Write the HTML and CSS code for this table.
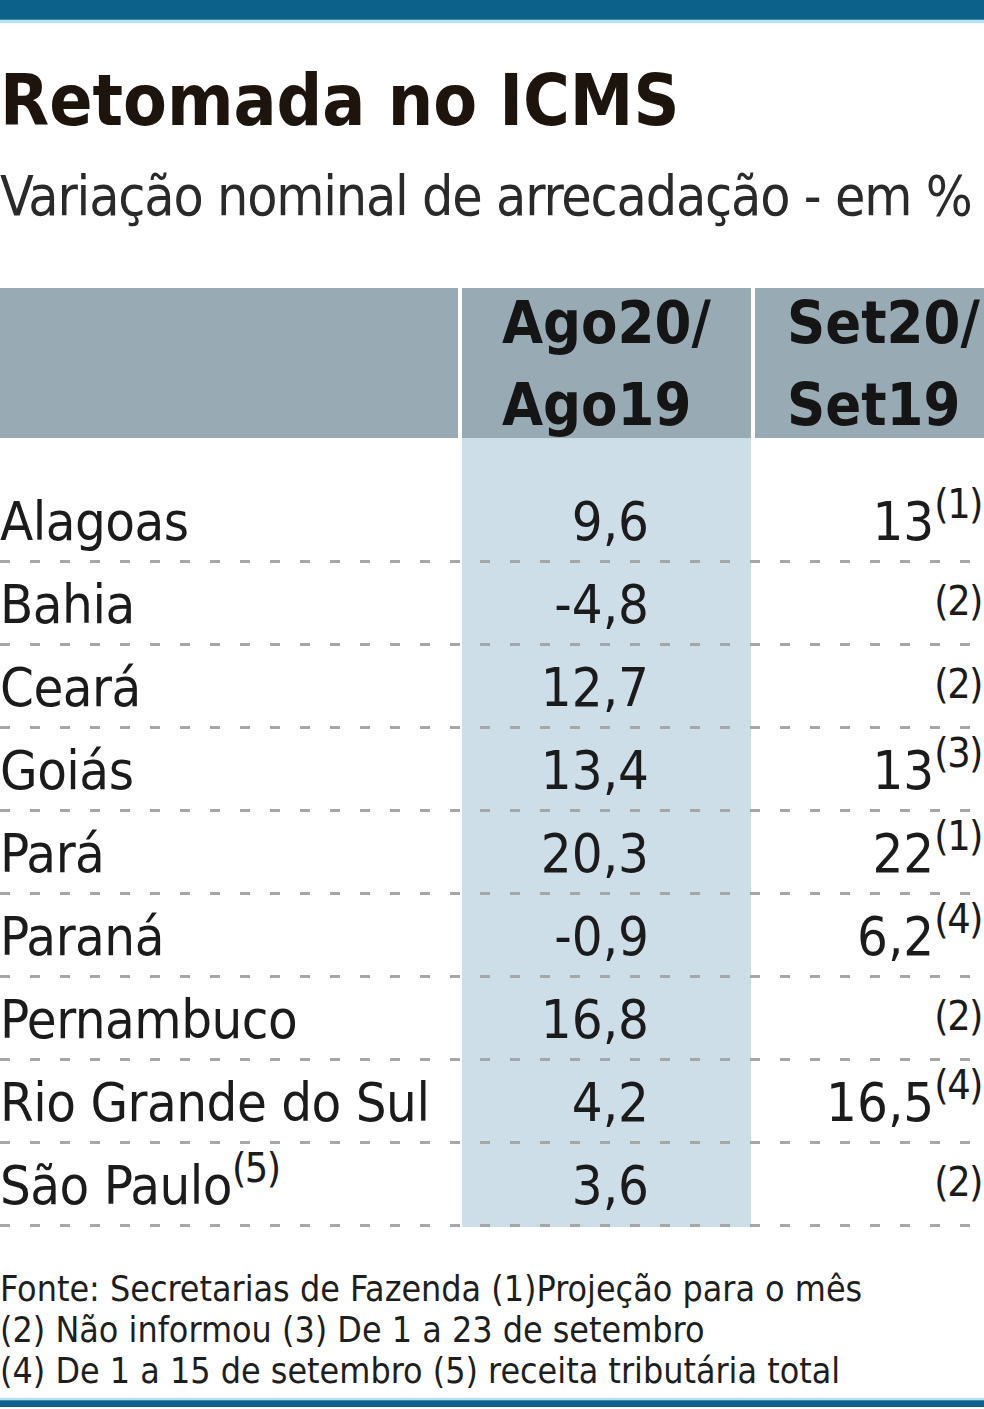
FILE: index.html
```html
<!DOCTYPE html>
<html lang="pt-BR">
<head>
<meta charset="utf-8">
<title>Retomada no ICMS</title>
<link rel="stylesheet" href="styles.css">
</head>
<body>
<div class="page">
  <div class="topbar"></div>
  <h1 class="title">Retomada no ICMS</h1>
  <p class="subtitle">Variação nominal de arrecadação - em %</p>

  <div class="table">
    <div class="thead">
      <div class="th th-label"></div>
      <div class="th th-a"><span class="th-text">Ago20/<br>Ago19</span></div>
      <div class="th th-b"><span class="th-text">Set20/<br>Set19</span></div>
    </div>
    <div class="tbody">
      <div class="row"><div class="c-label">Alagoas</div><div class="c-a">9,6</div><div class="c-b">13<span class="sup">(1)</span></div></div>
      <div class="row"><div class="c-label">Bahia</div><div class="c-a">-4,8</div><div class="c-b"><span class="note">(2)</span></div></div>
      <div class="row"><div class="c-label">Ceará</div><div class="c-a">12,7</div><div class="c-b"><span class="note">(2)</span></div></div>
      <div class="row"><div class="c-label">Goiás</div><div class="c-a">13,4</div><div class="c-b">13<span class="sup">(3)</span></div></div>
      <div class="row"><div class="c-label">Pará</div><div class="c-a">20,3</div><div class="c-b">22<span class="sup">(1)</span></div></div>
      <div class="row"><div class="c-label">Paraná</div><div class="c-a">-0,9</div><div class="c-b">6,2<span class="sup">(4)</span></div></div>
      <div class="row"><div class="c-label">Pernambuco</div><div class="c-a">16,8</div><div class="c-b"><span class="note">(2)</span></div></div>
      <div class="row"><div class="c-label">Rio Grande do Sul</div><div class="c-a">4,2</div><div class="c-b">16,5<span class="sup">(4)</span></div></div>
      <div class="row"><div class="c-label">São Paulo<span class="sup">(5)</span></div><div class="c-a">3,6</div><div class="c-b"><span class="note">(2)</span></div></div>
    </div>
  </div>

  <div class="footer">
    <p>Fonte: Secretarias de Fazenda (1)Projeção para o mês</p>
    <p>(2) Não informou (3) De 1 a 23 de setembro</p>
    <p>(4) De 1 a 15 de setembro (5) receita tributária total</p>
  </div>
  <div class="bottombar"></div>
</div>
</body>
</html>
```

FILE: styles.css
```css
html, body {
  margin: 0;
  padding: 0;
  background: #ffffff;
}

body {
  width: 984px;
  height: 1409px;
  overflow: hidden;
  color: #1b1b1b;
  font-family: "DejaVu Sans Condensed", "DejaVu Sans", sans-serif;
  font-stretch: condensed;
}

.page {
  display: flex;
  flex-direction: column;
  width: 984px;
}

.topbar {
  height: 24px;
  background: linear-gradient(to bottom,
    #0b618a 0, #0b618a 19px,
    #3f89aa 19px, #3f89aa 20px,
    #b8e2ee 20px, #b8e2ee 23px,
    #f2fafc 23px, #f2fafc 24px);
}

.title {
  margin: 41px 0 0 0;
  font-family: "DejaVu Sans Condensed", "DejaVu Sans", sans-serif;
  font-stretch: condensed;
  font-weight: 700;
  font-size: 71px;
  line-height: 71px;
  color: #1e140e;
  white-space: nowrap;
}

.subtitle {
  margin: 30px 0 0 0;
  font-family: "DejaVu Sans Condensed", "DejaVu Sans", sans-serif;
  font-stretch: condensed;
  font-weight: 400;
  font-size: 55px;
  line-height: 60px;
  letter-spacing: -1.2px;
  color: #2a2a2a;
  white-space: nowrap;
}

.table {
  margin-top: 62px;
  display: flex;
  flex-direction: column;
}

.thead {
  display: grid;
  grid-template-columns: 458px 289px 1fr;
  grid-template-rows: 150px;
  column-gap: 4px;
  height: 150px;
}

.th {
  background: #98abb5;
  font-weight: 700;
  font-size: 59px;
  line-height: 82px;
  color: #151515;
  white-space: nowrap;
  overflow: visible;
}

.th-text {
  display: block;
  margin-top: -6px;
}

.th-a {
  padding-left: 40px;
}

.th-b {
  padding-left: 32px;
}

.tbody {
  padding-top: 42px;
  background-image: linear-gradient(to right,
    transparent 0, transparent 462px,
    #cddee8 462px, #cddee8 751px,
    transparent 751px);
}

.row {
  display: grid;
  grid-template-columns: 458px 289px 1fr;
  column-gap: 4px;
  height: 83px;
  font-size: 54px;
  line-height: 83px;
  white-space: nowrap;
  background-image: repeating-linear-gradient(to right,
    #a4a6a8 0, #a4a6a8 10px,
    transparent 10px, transparent 30px);
  background-size: 100% 3px;
  background-position: 0 100%;
  background-repeat: no-repeat;
}

.c-label {
  text-align: left;
  letter-spacing: -0.5px;
}

.c-a {
  text-align: right;
  padding-right: 102px;
}

.c-b {
  text-align: right;
  padding-right: 2px;
}

.sup {
  font-size: 41px;
  line-height: 0;
  vertical-align: 22px;
  letter-spacing: -1.5px;
}

.note {
  font-size: 41px;
  line-height: 0;
  vertical-align: 8px;
  letter-spacing: -1.5px;
}

.footer {
  margin-top: 41px;
  font-size: 35.5px;
  line-height: 41px;
  color: #1e1e1e;
}

.footer p {
  margin: 0;
  white-space: nowrap;
}

.bottombar {
  margin-top: 6px;
  height: 10px;
  background: linear-gradient(to bottom,
    #e8f6fa 0, #e8f6fa 1px,
    #b8e2ee 1px, #b8e2ee 3px,
    #3f89aa 3px, #3f89aa 4px,
    #0b618a 4px, #0b618a 10px);
}
```
